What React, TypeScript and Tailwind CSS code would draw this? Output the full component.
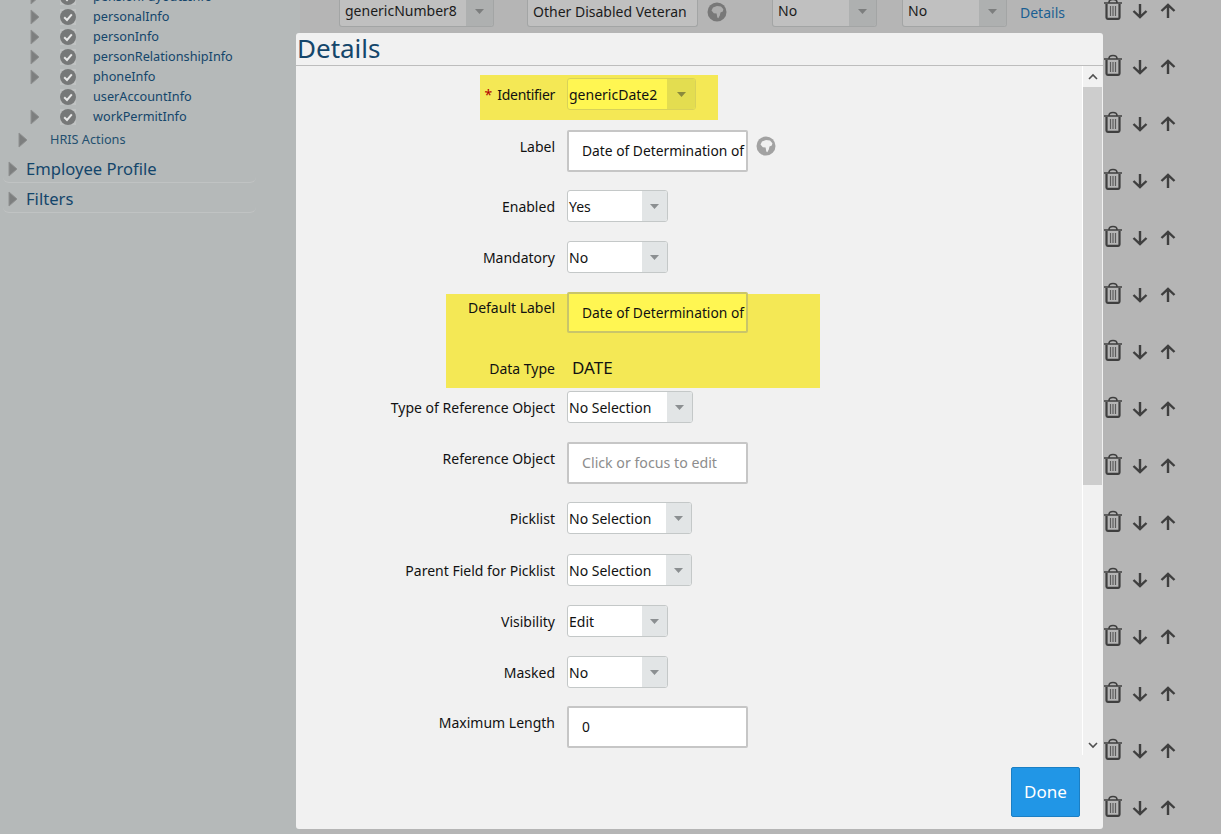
import React from 'react'

const SANS = "font-['Noto_Sans',sans-serif]"

const Caret = ({ className = '' }: { className?: string }) => (
    <svg width="9" height="5" viewBox="0 0 9 5" className={className}>
        <path d="M0 0h9L4.5 5z" fill="currentColor" />
    </svg>
)

const Globe = ({ className = '', land }: { className?: string; land: string }) => (
    <svg width="20" height="20" viewBox="0 0 20 20" className={className}>
        <circle cx="10" cy="10" r="9.5" fill="currentColor" />
        <path d="M4.5 8.5 6 5.5 10 4l4 .6 2.4 2.6-.6 2.2-2.3 1-.7 3-1.5 2.8-1-.6-.7-4-2.8-.3z" fill={land} />
    </svg>
)

const Trash = () => (
    <svg width="20" height="22" viewBox="0 0 20 22" className="-mt-[4px] text-[#3f3f3f]">
        <path d="M1 5h18M6 4.5c0-4 8-4 8 0" fill="none" stroke="currentColor" strokeWidth="1.6" />
        <path d="M3.5 6v13.5c0 .8.5 1.3 1.3 1.3h10.4c.8 0 1.3-.5 1.3-1.3V6" fill="none" stroke="currentColor" strokeWidth="2.2" />
        <path d="M7.5 8v10M10 8v10M12.5 8v10" stroke="currentColor" strokeWidth="1.2" opacity="0.75" />
    </svg>
)

const ArrowDown = () => (
    <svg width="16" height="16" viewBox="0 0 16 16" className="text-[#3f3f3f]">
        <path d="M8 1v13M1.5 8 8 14.2 14.5 8" fill="none" stroke="currentColor" strokeWidth="2.4" />
    </svg>
)

const ArrowUp = () => (
    <svg width="16" height="16" viewBox="0 0 16 16" className="text-[#3f3f3f]">
        <path d="M8 15V2M1.5 8 8 1.8 14.5 8" fill="none" stroke="currentColor" strokeWidth="2.4" />
    </svg>
)

const TreeArrow = () => (
    <svg width="10" height="16" viewBox="0 0 10 16" className="shrink-0">
        <path d="M1 1l8 7-8 7z" fill="#7d7f7f" stroke="#8f9191" strokeWidth="1" />
    </svg>
)

const Check = () => (
    <span className="flex h-4 w-4 shrink-0 items-center justify-center bg-[#c0c3c3]">
        <svg width="16" height="16" viewBox="0 0 16 16">
            <circle cx="8" cy="8" r="8" fill="#767878" />
            <path d="M4.2 8.2 7 11l4.8-5.6" fill="none" stroke="#e8e8e8" strokeWidth="2" />
        </svg>
    </span>
)

const TreeItem = ({ name, arrow = true }: { name: string; arrow?: boolean }) => (
    <div className="flex h-5 items-center pl-[30px]">
        <div className="w-[30px] shrink-0">{arrow && <TreeArrow />}</div>
        <Check />
        <span className="ml-[17px] text-[12.7px] text-[#14466b]">{name}</span>
    </div>
)

const Sidebar = () => (
    <div className="w-[300px] shrink-0 bg-[#b5b9b9] pl-[3px]">
        <div className="-mt-[13px] w-[253px]">
            <div className="-ml-[3px]">
                <TreeItem name="pensionPayoutsInfo" />
                <TreeItem name="personalInfo" />
                <TreeItem name="personInfo" />
                <TreeItem name="personRelationshipInfo" />
                <TreeItem name="phoneInfo" />
                <TreeItem name="userAccountInfo" arrow={false} />
                <TreeItem name="workPermitInfo" />
            </div>
            <div className="mt-[3px] flex h-5 items-center pl-[15px]">
                <TreeArrow />
                <span className="ml-[22px] text-[12.7px] text-[#24506f]">HRIS Actions</span>
            </div>
            <div className="mt-[6px] flex h-[27px] items-center rounded-md border-b border-[#c0c3c3] pl-[5px]">
                <TreeArrow />
                <span className="ml-[8px] text-[16.6px] text-[#14466b]">Employee Profile</span>
            </div>
            <div className="mt-[3px] flex h-[27px] items-center rounded-md border-b border-[#c0c3c3] pl-[5px]">
                <TreeArrow />
                <span className="ml-[8px] text-[16.6px] text-[#14466b]">Filters</span>
            </div>
        </div>
    </div>
)

const BgSelect = ({ value, className }: { value: string; className: string }) => (
    <div className={`flex h-[30px] items-stretch overflow-hidden rounded-b-[3px] border border-t-0 border-[#a3a5a5] bg-[#c0c0c0] ${className}`}>
        <span className="flex-1 pl-[5px] pt-[3px] text-[14px] text-[#1b1b1b]">{value}</span>
        <span className="flex w-[27px] items-center justify-center bg-[#aeb0b0] text-[#7c7e7e]"><Caret /></span>
    </div>
)

const Actions = () => (
    <div className="flex w-[76px] shrink-0 items-center gap-[9px]">
        <Trash />
        <ArrowDown />
        <span className="ml-[3px]"><ArrowUp /></span>
    </div>
)

const Background = () => (
    <div className="flex-1">
        <div className="-mt-[3px] flex h-[30px] items-center pl-[39px]">
            <BgSelect value="genericNumber8" className="w-[155px]" />
            <div className="ml-[33px] flex h-[30px] w-[171px] items-center rounded-b-[3px] border border-t-0 border-[#a3a5a5] bg-[#c0c0c0] pl-[5px] text-[14px] text-[#1b1b1b]">Other Disabled Veteran</div>
            <Globe className="ml-[9px] text-[#787878]" land="#adadad" />
            <BgSelect value="No" className="ml-[45px] w-[105px]" />
            <BgSelect value="No" className="ml-[25px] w-[105px]" />
            <span className="ml-[13px] w-[83px] shrink-0 text-[14px] text-[#1b5f92]">Details</span>
            <div className="-mt-[2px]"><Actions /></div>
        </div>
        <div className="mt-[31px] flex flex-col items-end pr-[42px]">
            {Array.from({ length: 14 }).map((_, i) => (
                <div key={i} className="flex h-[57px] items-start"><Actions /></div>
            ))}
        </div>
    </div>
)

const Label = ({ children, className = '' }: { children: React.ReactNode; className?: string }) => (
    <div className={`w-[259px] shrink-0 text-right text-[14px] text-[#111] ${className}`}>{children}</div>
)

const Select = ({ value, width }: { value: string; width: string }) => (
    <div className={`flex h-[32px] items-stretch overflow-hidden rounded-[3px] border border-[#c4c8c8] bg-white ${width}`}>
        <span className="flex-1 pl-[1px] pt-[5px] text-[14px] text-[#111]">{value}</span>
        <span className="flex w-[25px] items-center justify-center bg-[#e2e5e6] text-[#8b8f91]"><Caret /></span>
    </div>
)

const Input = ({ value, muted = false }: { value: string; muted?: boolean }) => (
    <div className={`flex h-[42px] w-[181px] items-center overflow-hidden rounded-[2px] border-2 border-[#c6c6c6] bg-white pl-[13px] whitespace-nowrap ${muted ? 'text-[14.2px] text-[#8d8d8d]' : 'text-[13.8px] text-[#111]'}`}>
        {value}
    </div>
)

const Row = ({ height, children, className = '' }: { height: string; children: React.ReactNode; className?: string }) => (
    <div className={`relative flex items-start ${height} ${className}`}>{children}</div>
)

const Form = () => (
    <div className="flex-1 overflow-hidden pt-[12px]">
        <Row height="h-[52px]">
            <div className="absolute top-[-3px] left-[184px] h-[45px] w-[238px] bg-[#f4e855]" />
            <Label className="relative pt-[6px] tracking-[-0.3px]"><span className="mr-[2px] text-[#b00000]">*</span> Identifier</Label>
            <div className="relative ml-[12px] flex h-[32px] w-[129px] items-stretch overflow-hidden rounded-[3px] border border-[#d8d258] bg-[#fff652]">
                <span className="flex-1 pl-[1px] pt-[5px] text-[14px] text-[#111]">genericDate2</span>
                <span className="flex w-[28px] items-center justify-center bg-[#e3dd50] text-[#8a8a3c]"><Caret /></span>
            </div>
        </Row>
        <Row height="h-[60px]">
            <Label className="pt-[6px]">Label</Label>
            <div className="ml-[12px]"><Input value="Date of Determination of" /></div>
            <Globe className="mt-[6px] ml-[8px] text-[#a2a2a2]" land="#f1f1f1" />
        </Row>
        <Row height="h-[51px]">
            <Label className="pt-[6px]">Enabled</Label>
            <div className="ml-[12px]"><Select value="Yes" width="w-[101px]" /></div>
        </Row>
        <Row height="h-[51px]">
            <Label className="pt-[6px]">Mandatory</Label>
            <div className="ml-[12px]"><Select value="No" width="w-[101px]" /></div>
        </Row>
        <Row height="h-[60px]">
            <div className="absolute top-[2px] left-[150px] h-[94px] w-[374px] bg-[#f4e855]" />
            <Label className="relative pt-[5px]">Default Label</Label>
            <div className="relative ml-[12px] flex h-[41px] w-[181px] items-center overflow-hidden rounded-[2px] border-2 border-[#c9c56a] bg-[#fff652] pl-[13px] pt-[2px] text-[13.8px] whitespace-nowrap text-[#111]">Date of Determination of</div>
        </Row>
        <Row height="h-[39px]">
            <Label className="relative pt-[6px]">Data Type</Label>
            <span className="relative ml-[17px] pt-[4px] text-[17px] leading-[24px] text-[#111]">DATE</span>
        </Row>
        <Row height="h-[51px]">
            <Label className="pt-[6px]">Type of Reference Object</Label>
            <div className="ml-[12px]"><Select value="No Selection" width="w-[126px]" /></div>
        </Row>
        <Row height="h-[60px]">
            <Label className="pt-[6px]">Reference Object</Label>
            <div className="ml-[12px]"><Input value="Click or focus to edit" muted /></div>
        </Row>
        <Row height="h-[52px]">
            <Label className="pt-[6px]">Picklist</Label>
            <div className="ml-[12px]"><Select value="No Selection" width="w-[125px]" /></div>
        </Row>
        <Row height="h-[51px]">
            <Label className="pt-[6px]">Parent Field for Picklist</Label>
            <div className="ml-[12px]"><Select value="No Selection" width="w-[125px]" /></div>
        </Row>
        <Row height="h-[51px]">
            <Label className="pt-[6px]">Visibility</Label>
            <div className="ml-[12px]"><Select value="Edit" width="w-[101px]" /></div>
        </Row>
        <Row height="h-[50px]">
            <Label className="pt-[6px]">Masked</Label>
            <div className="ml-[12px]"><Select value="No" width="w-[101px]" /></div>
        </Row>
        <Row height="h-[42px]">
            <Label className="pt-[6px]">Maximum Length</Label>
            <div className="ml-[12px]"><Input value="0" /></div>
        </Row>
    </div>
)

const Scrollbar = () => (
    <div className="flex w-[20px] shrink-0 flex-col border-l border-white">
        <div className="flex h-[21px] items-center justify-center">
            <svg width="10" height="7" viewBox="0 0 10 7"><path d="M1 6l4-4 4 4" fill="none" stroke="#505050" strokeWidth="1.6" /></svg>
        </div>
        <div className="h-[398px] bg-[#cdcdcd]" />
        <div className="flex flex-1 items-end justify-center pb-[6px]">
            <svg width="10" height="7" viewBox="0 0 10 7"><path d="M1 1l4 4 4-4" fill="none" stroke="#505050" strokeWidth="1.6" /></svg>
        </div>
    </div>
)

const App: React.FC = () => {
    return (
        <div className={`relative flex h-[834px] w-[1221px] overflow-hidden bg-[#b5b5b5] ${SANS}`}>
            <Sidebar />
            <Background />
            <div className="absolute top-[33px] left-[296px] flex h-[796px] w-[807px] flex-col rounded-[3px] bg-[#f1f1f1]">
                <div className="h-[33px] shrink-0 border-b border-[#bdbdbd] pl-[1px] text-[26px] leading-[30px] text-[#14466b]">Details</div>
                <div className="flex h-[689px] shrink-0 pr-px">
                    <Form />
                    <Scrollbar />
                </div>
                <div className="flex flex-1 items-start justify-end pt-[12px] pr-[23px]">
                    <button className="h-[50px] w-[69px] rounded-[2px] border border-[#1b7fc4] bg-[#2196e6] text-[17px] text-white">Done</button>
                </div>
            </div>
        </div>
    )
}

export default App
